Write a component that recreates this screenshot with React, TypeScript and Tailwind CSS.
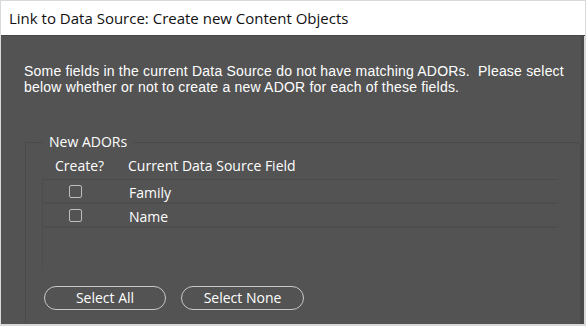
const font = { fontFamily: '"Open Sans", "Noto Sans", sans-serif' };
const body = { fontFamily: '"Liberation Sans", Arial, sans-serif' };

const fields = ['Family', 'Name'];

export default function App() {
  return (
    <div className="w-[586px] h-[326px] flex flex-col bg-[#d9d9d9] overflow-hidden" style={font}>
      <div className="h-[35px] mx-[1px] mt-[1px] flex items-center pl-[8px] bg-white border-b border-[#464646] text-[15px] text-[#111]">
        Link to Data Source: Create new Content Objects
      </div>
      <div className="flex-1 ml-[1px] mr-[2px] mb-[2px] flex flex-col bg-[#535353] border-r-[3px] border-[#4a4a4a] text-[14px] text-white">
        <div className="pl-[23px] pt-[27px] leading-[16px] text-[14px] tracking-[0.2px]" style={body}>
          <p>Some fields in the current Data Source do not have matching ADORs.&nbsp; Please select</p>
          <p>below whether or not to create a new ADOR for each of these fields.</p>
        </div>
        <div className="relative mt-[47px] ml-[24px] flex-1 border-l border-t border-r border-[#4a4a4a] rounded-tr-[4px]">
          <span className="absolute -top-[10px] left-[17px] px-[6px] bg-[#535353] leading-[18px]">New ADORs</span>
          <div className="pt-[13px] pl-[29px] flex leading-[20px]">
            <span className="w-[73px]">Create?</span>
            <span>Current Data Source Field</span>
          </div>
          <div className="ml-[16px] mr-[22px] h-[90px] border-l border-[#4c4c4c] mt-[3px] border-t border-t-[#4c4c4c]">
            {fields.map((f) => (
              <div key={f} className="h-[24px] pt-[3px] flex items-center border-b-2 border-[#4e4e4e]">
                <span className="ml-[26px] w-[13px] h-[13px] border border-[#bdbdbd] rounded-[2px] -mt-[2px]" />
                <span className="ml-[47px]">{f}</span>
              </div>
            ))}
          </div>
          <div className="mt-[17px] ml-[18px] flex gap-[15px]">
            <button className="w-[122px] h-[24px] rounded-full border border-[#c8c8c8] text-white text-[14px] leading-none">
              Select All
            </button>
            <button className="w-[123px] h-[24px] rounded-full border border-[#c8c8c8] text-white text-[14px] leading-none">
              Select None
            </button>
          </div>
        </div>
      </div>
    </div>
  );
}
